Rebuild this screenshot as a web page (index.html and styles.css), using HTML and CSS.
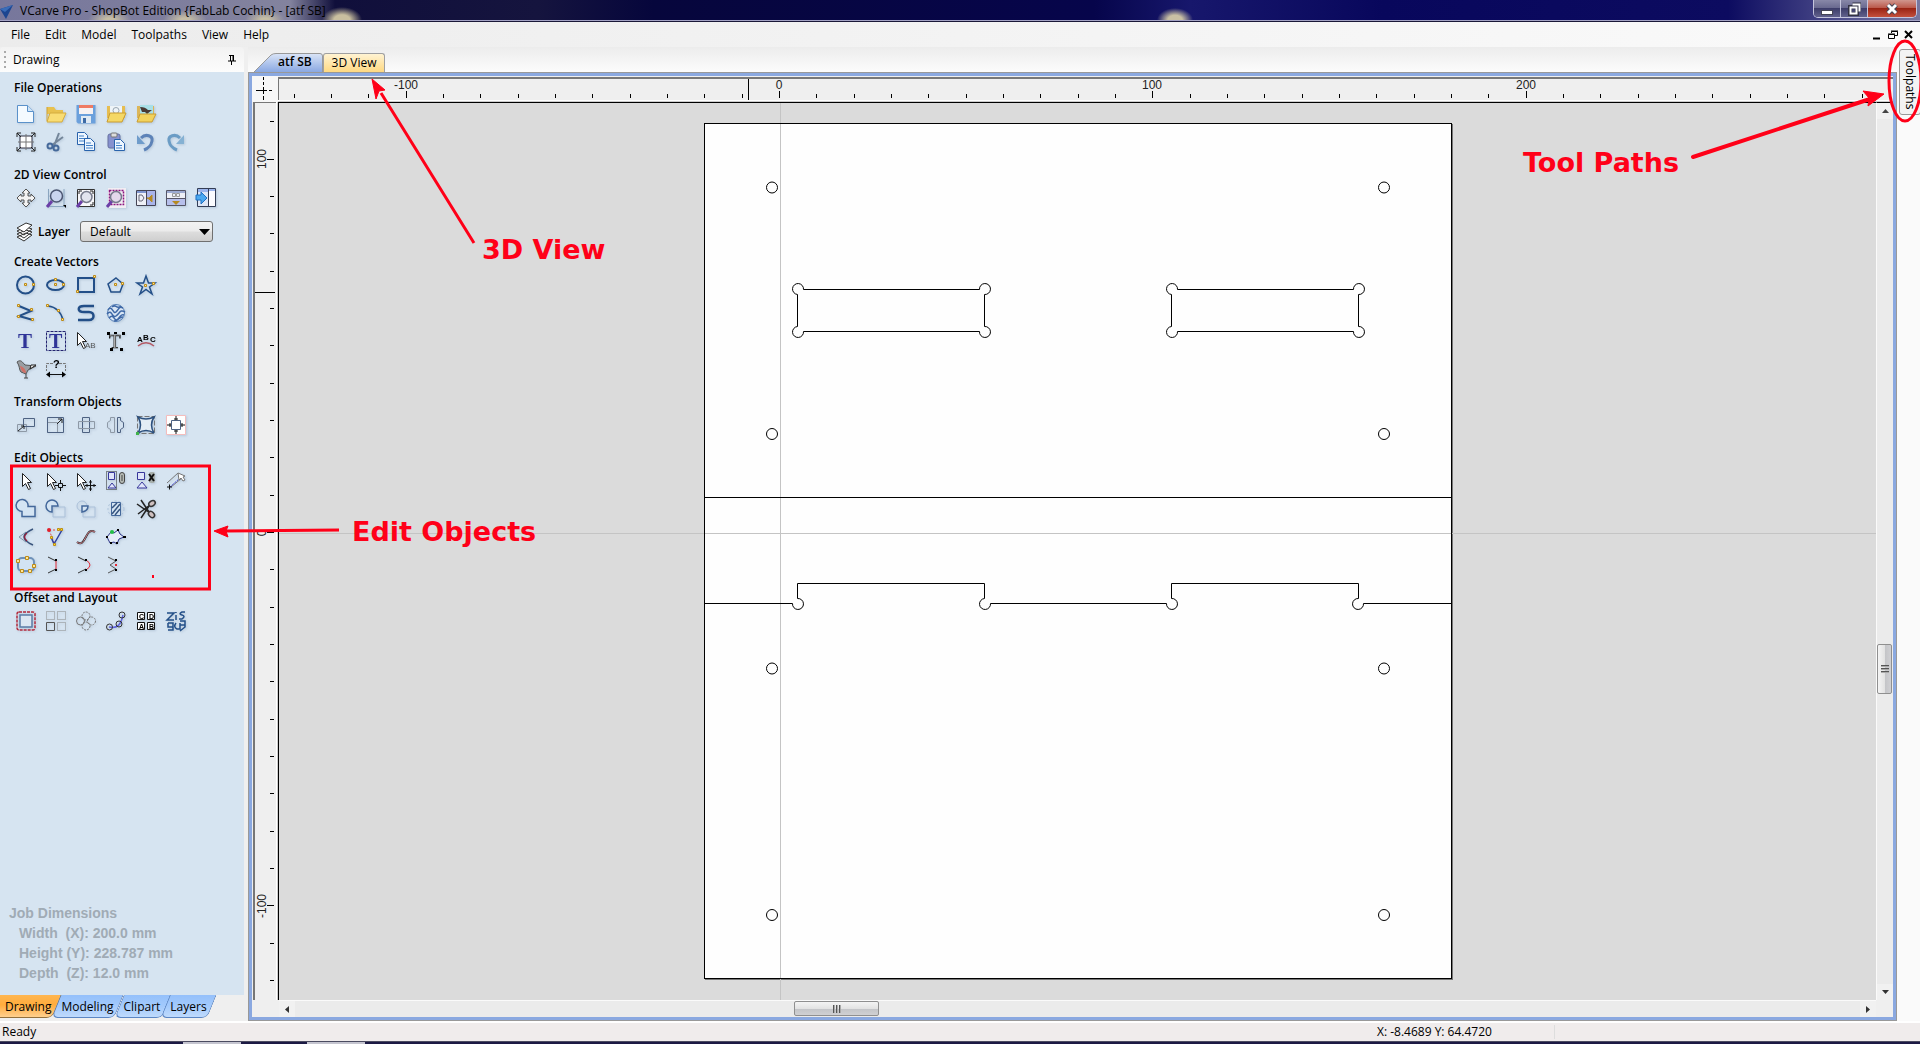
FILE: index.html
```html
<!DOCTYPE html>
<html lang="en">
<head>
<meta charset="utf-8">
<title>VCarve Pro - ShopBot Edition</title>
<link rel="stylesheet" href="styles.css">
</head>
<body>
<div class="app">
  <header class="titlebar">
    <svg class="title-logo" width="13" height="18" viewBox="0 0 13 18"><path d="M0 7 13 3 6 17Z" fill="#1d4590"/><path d="M0 7 13 3 5 10Z" fill="#3a6cb8"/></svg>
    <span class="title-text">VCarve Pro - ShopBot Edition {FabLab Cochin} - [atf SB]</span>
    <div class="window-buttons">
      <button class="win-btn" aria-label="Minimize"><svg width="12" height="14"><rect x=".5" y="8.500" width="11" height="4" fill="#fff" stroke="#445"/></svg></button>
      <button class="win-btn" aria-label="Restore"><svg width="13" height="14"><path d="M4.500 2.500h7v7M2 5h7v7H2Z" fill="none" stroke="#334" stroke-width="4"/><path d="M4.500 2.500h7v7M2.500 5.500h6v6h-6Z" fill="none" stroke="#fff" stroke-width="2"/></svg></button>
      <button class="win-btn win-close" aria-label="Close"><svg width="14" height="14"><path d="m3 3 8 8m0-8-8 8" stroke="#445" stroke-width="5"/><path d="m3 3 8 8m0-8-8 8" stroke="#fff" stroke-width="3"/></svg></button>
    </div>
  </header>

  <nav class="menubar">
    <button class="menu">File</button><button class="menu">Edit</button><button class="menu">Model</button><button class="menu">Toolpaths</button><button class="menu">View</button><button class="menu">Help</button>
    <div class="child-buttons">
      <button aria-label="Minimize drawing"><svg width="10" height="10"><path d="M1 8.500h7" stroke="#000" stroke-width="2"/></svg></button>
      <button aria-label="Restore drawing"><svg width="10" height="10"><path d="M3.500 3V1.500h6v4H7M3 1h7M.5 4.500h6v4h-6Z M0 4h7" fill="none" stroke="#000"/></svg></button>
      <button aria-label="Close drawing"><svg width="10" height="10"><path d="m1 1 7 7m0-7-7 7" stroke="#000" stroke-width="2"/></svg></button>
    </div>
  </nav>

  <main class="workspace">
    <aside class="dock">
      <div class="dock-header"><span class="grip"></span><span>Drawing</span>
        <button class="pin" aria-label="Auto hide"><svg width="8" height="10"><path d="M2.500 0v6M1 .5h5M5 0v6M0 6h8M3.500 6v4" fill="none" stroke="#000"/><path d="M5.500 0v6" stroke="#000"/></svg></button>
      </div>
      <div class="panel">
        <section class="group group-file">
          <h2>File Operations</h2>
          <div class="tools">
            <button aria-label="New"><svg viewBox="0 0 20 20"><path d="M1.500 1.500h10l6 6v11h-16Z" fill="#f4faff" stroke="#5a91ca"/><path d="M11.500 1.500v6h6" fill="#cfe4f7" stroke="#5a91ca"/></svg></button>
            <button aria-label="Open"><svg viewBox="0 0 20 20"><path d="M1 3h7l2 3h7v4H1Z" fill="#e8c14e"/><path d="M1 3v14" stroke="#cfa336"/><path d="M4 9h16l-4 9H1Z" fill="#f9dd74" stroke="#d5ac3e"/></svg></button>
            <button aria-label="Save"><svg viewBox="0 0 20 20"><path d="M.5 1h19v18.500H2L.5 18Z" fill="#6ba0dc"/><path d="M3 1h14v9H3Z" fill="#f6f1f2"/><path d="M3 1h14v3H3Z" fill="#ef7b63"/><path d="M5 12h10v7H5Z" fill="#dfe9f3"/><path d="M7 14h3v5H7Z" fill="#3e6ba6"/></svg></button>
            <button aria-label="Import vectors"><svg viewBox="0 0 20 20"><path d="M1 2h18v12H1Z" fill="#e6bd51"/><path d="M4 2h12v9H4Z" fill="#eef4f8"/><circle cx="10" cy="6.500" r="3" fill="none" stroke="#9aa7b3"/><path d="M4 9h16l-4 9H1Z" fill="#f5d865" stroke="#c99c31"/></svg></button>
            <button aria-label="Import bitmap"><svg viewBox="0 0 20 20"><path d="M1 2h17v12H1Z" fill="#dbb65a"/><path d="M4 1h13v10H4Z" fill="#a9e0e8"/><path d="M4 3c4 0 6 1 8 3h4l-5 4-2-2-3 0Z" fill="#493a35"/><path d="M4 10h16l-4 8H1Z" fill="#f2d25c" stroke="#c99c31"/></svg></button>
          </div>
          <div class="tools">
            <button aria-label="Job setup"><svg viewBox="0 0 20 20"><path d="M4 4h12v12H4Z" fill="#fff" stroke="#334"/><path d="M10 2v16M2 10h16" stroke="#777"/><path d="m1 1 4 4M1 5V1h4M19 1l-4 4M15 1h4v4M1 19l4-4M1 15v4h4M19 19l-4-4M15 19h4v-4" fill="none" stroke="#222"/></svg></button>
            <button aria-label="Cut"><svg viewBox="0 0 20 20"><path d="m13 1-5 13M17 5 6 13" stroke="#74869a" stroke-width="2"/><circle cx="4" cy="14" r="2.500" fill="none" stroke="#45699a" stroke-width="2"/><circle cx="10" cy="16" r="2.500" fill="none" stroke="#45699a" stroke-width="2"/></svg></button>
            <button aria-label="Copy"><svg viewBox="0 0 20 20"><path d="M1.500.5h7l3 3v9h-10Z" fill="#eef6ff" stroke="#2963ac"/><path d="M3 4h5M3 6.500h6M3 9h6" stroke="#4381c7"/><path d="M8.500 6.500h6l4 4v8h-10Z" fill="#eef6ff" stroke="#2963ac"/><path d="M10 11h5M10 13.500h7M10 16h7" stroke="#4381c7"/></svg></button>
            <button aria-label="Paste"><svg viewBox="0 0 20 20"><rect x="2" y="2" width="12" height="14" rx="2" fill="#8691cf" stroke="#66709f"/><rect x="5" y="1" width="6" height="4" rx="1" fill="#ddd" stroke="#777"/><path d="M8.500 7.500h6l4 4v7h-10Z" fill="#eef6ff" stroke="#2963ac"/><path d="M10 11h4M10 13.500h6M10 16h6" stroke="#4381c7"/></svg></button>
            <button aria-label="Undo"><svg viewBox="0 0 20 20"><path d="M5 6c5-5 12-2 11 3-1 5-3 7-8 9" fill="none" stroke="#5d83b8" stroke-width="3"/><path d="M1 3v9h8Z" fill="#6f9ccb"/></svg></button>
            <button aria-label="Redo"><svg viewBox="0 0 20 20"><path d="M14 6C9 1 2 4 3 9c1 5 3 7 8 9" fill="none" stroke="#6b9cc5" stroke-width="3"/><path d="M18 3v9h-8Z" fill="#85b1d3"/></svg></button>
          </div>
        </section>

        <section class="group">
          <h2>2D View Control</h2>
          <div class="tools">
            <button aria-label="Pan"><svg viewBox="0 0 20 20"><path d="m10 1 4 4h-2v3h3V6l4 4-4 4v-2h-3v3h2l-4 4-4-4h2v-3H5v2l-4-4 4-4v2h3V5H6Z" fill="#f3f3f3" stroke="#555"/></svg></button>
            <button aria-label="Zoom"><svg viewBox="0 0 20 20"><path d="M2.500 1v17.500H18V1" fill="none" stroke="#8ba6c0"/><path d="m6 13-5 6" stroke="#6b3fa8" stroke-width="3"/><circle cx="10.500" cy="8" r="6" fill="#c9d4ee" stroke="#4c5672" stroke-width="1.500"/><path d="M17 17h3v3" fill="#000"/></svg></button>
            <button aria-label="Zoom to drawing"><svg viewBox="0 0 20 20"><path d="M1.500 1.500h17v17h-17Z" fill="#f8f8fb" stroke="#333"/><path d="M3 6V3h3M14 3h3v3M17 14v3h-3" fill="none" stroke="#222"/><path d="m6 13-5 6" stroke="#6b3fa8" stroke-width="3"/><circle cx="10.500" cy="9" r="5.500" fill="#e2e4ee" stroke="#777b8c" stroke-width="1.500"/></svg></button>
            <button aria-label="Zoom to selected"><svg viewBox="0 0 20 20"><path d="M2 0h18v20H2Z" fill="#f1eef3"/><path d="M3.500 2.500h14v14h-14Z" fill="none" stroke="#8c1480" stroke-width="1.500" stroke-dasharray="2 1"/><path d="m6 13-5 6" stroke="#6b3fa8" stroke-width="3"/><circle cx="10" cy="9" r="5.500" fill="#e4d9ec" stroke="#777b8c" stroke-width="1.500"/></svg></button>
            <button aria-label="Tile vertically"><svg viewBox="0 0 20 20"><path d="M.5 2.500h19v15H.5Z" fill="#eef0f7" stroke="#445"/><path d="M1 3h18v2H1Z" fill="#7f96cf"/><path d="M10 3h9v14h-9Z" fill="#a9b4ea"/><path d="M10.500 3v14" stroke="#445"/><path d="M3 7h3l2 3-2 3H3Z" fill="none" stroke="#667"/><path d="M11 10h2l3-3v7l-3-3Z" fill="#b58a22" stroke="#b58a22"/></svg></button>
            <button aria-label="Tile horizontally"><svg viewBox="0 0 20 20"><path d="M.5 2.500h19v15H.5Z" fill="#eef0f7" stroke="#556"/><path d="M1 3h18v2H1Z" fill="#9dabd2"/><path d="M1 11h18v6H1Z" fill="#b7bfeb"/><path d="M0 10.500h20" stroke="#556"/><path d="M6.500 5.500h3v3h-3ZM10.500 5.500h3v3h-3Z" fill="none" stroke="#999"/><path d="m10 17-4-4h8Z" fill="#b58a22"/></svg></button>
            <button aria-label="Toggle panels"><svg viewBox="0 0 20 20"><path d="M1.500.5h18v18h-18Z" fill="#dde6f6" stroke="#333d55"/><path d="M2 1h17v3H2Z" fill="#9bb4ec"/><path d="M12.500 1v17" stroke="#333d55"/><path d="M13 3h6v15h-6Z" fill="#fbfbff"/><path d="M0 7h5V4l6 6-6 6v-4H0Z" fill="#4aa8f0" stroke="#1f70c4"/></svg></button>
          </div>
          <div class="layer-row">
            <svg width="18" height="20" viewBox="0 0 18 20"><path d="m1 15 9-4 6 2-8 6ZM1 12l9-4 6 2-8 6ZM1 9l9-4 6 2-8 6Z" fill="#fff" stroke="#333"/><path d="m1 6 9-5 6 2-8 7Z" fill="#fff" stroke="#333"/></svg>
            <label for="layer">Layer</label>
            <span class="select-wrap"><select id="layer"><option>Default</option></select><svg width="11" height="6"><path d="M0 0h11L5.500 6Z"/></svg></span>
          </div>
        </section>

        <section class="group">
          <h2>Create Vectors</h2>
          <div class="tools">
            <button aria-label="Circle"><svg viewBox="0 0 20 20"><circle class="ink" cx="9.500" cy="10" r="8.500"/><path class="node" d="M8.500 8.500h2v2h-2ZM16.500 8.500h2v2h-2Z"/></svg></button>
            <button aria-label="Ellipse"><svg viewBox="0 0 20 20"><ellipse class="ink" cx="9.500" cy="10" rx="8.500" ry="5"/><path class="node" d="M8.500 8.500h2v2h-2ZM16.500 8.500h2v2h-2ZM8.500 3.500h2v2h-2Z"/></svg></button>
            <button aria-label="Rectangle"><svg viewBox="0 0 20 20"><path class="ink" d="M2 3h16v14H2Z"/><path class="node" d="M17.500.5h2v2h-2ZM.5 15.500h2v2h-2Z"/></svg></button>
            <button aria-label="Polygon"><svg viewBox="0 0 20 20"><path class="ink thin" d="m10 3 7 6-3 8H5L2 9Z"/><path class="node" d="M8.500 8.500h2v2h-2ZM15.500 7.500h2v2h-2Z"/></svg></button>
            <button aria-label="Star"><svg viewBox="0 0 20 20"><path class="ink thin" d="m10 1 2.500 7H19l-5.500 4 2.500 7-6-4.500L4 19l2.500-7L1 8h6.500Z"/><path class="node" d="M8.500 9.500h2v2h-2ZM16.500 7.500h2v2h-2Z"/></svg></button>
          </div>
          <div class="tools">
            <button aria-label="Polyline"><svg viewBox="0 0 20 20"><path class="ink" d="m3 3 12 5L3 13l14 4"/><path class="node" d="M1.500 1.500h2v2h-2ZM14.500 5.500h2v2h-2ZM1.500 12.500h2v2h-2ZM15.500 15.500h2v2h-2Z"/></svg></button>
            <button aria-label="Arc"><svg viewBox="0 0 20 20"><path class="ink thin" d="M2 3c8 1 13 6 15 14"/><path class="node" d="M.5 1.500h2v2h-2ZM11.500 6.500h2v2h-2ZM15.500 15.500h2v2h-2Z"/></svg></button>
            <button aria-label="Curve"><svg viewBox="0 0 20 20"><path class="ink thick" d="M18 3H8C1 3 1 9 8 9h5c6 0 6 8 0 8H2"/></svg></button>
            <button aria-label="Texture"><svg viewBox="0 0 20 20"><circle cx="10" cy="10" r="8.500" fill="#d9e6f5" stroke="#527cb4"/><path d="M2 7c4-6 5 5 8 2s3-6 7-4M1 11c5-6 5 5 9 2s4-7 9-4M3 15c5-6 5 5 9 1s3-5 6-4M6 4c4-4 4 3 9-1M8 18c5 0 4-4 9-4" fill="none" stroke="#3f69a7" stroke-width="1.500"/></svg></button>
          </div>
          <div class="tools">
            <button aria-label="Text"><svg viewBox="0 0 20 20"><text class="glyph" x="2" y="17" font-size="21">T</text></svg></button>
            <button aria-label="Text in box"><svg viewBox="0 0 20 20"><path d="M.5.500h19v19H.5Z" fill="none" stroke="#23236f" stroke-dasharray="3 1"/><text class="glyph" x="3" y="17" font-size="20">T</text></svg></button>
            <button aria-label="Edit text"><svg viewBox="0 0 20 20"><path class="cursor" d="M1.500 1.500v13l3-3 3 6 2-1-3-6h4Z"/><text x="9" y="17" font-size="8" font-family="Liberation Sans" fill="#555">AB</text></svg></button>
            <button aria-label="Convert text"><svg viewBox="0 0 20 20"><text x="3" y="17" font-size="19" font-family="Liberation Serif" fill="#ddd" stroke="#222" stroke-width=".7">T</text><path d="M1 1h3v3H1ZM16 1h3v3h-3ZM4 17h3v3H4ZM14 17h3v3h-3ZM8 1h3v2H8Z"/></svg></button>
            <button aria-label="Text on curve"><svg viewBox="0 0 20 20"><text x="1" y="11" font-size="8" font-weight="bold" font-family="Liberation Sans">A</text><text x="7" y="9" font-size="8" font-weight="bold" font-family="Liberation Sans">B</text><text x="14" y="11" font-size="8" font-weight="bold" font-family="Liberation Sans">C</text><path d="M2 15c5-4 11-4 16 0" fill="none" stroke="#b45a66" stroke-width="1.500"/></svg></button>
          </div>
          <div class="tools">
            <button aria-label="Trace bitmap"><svg viewBox="0 0 20 20"><path d="M1 3c4-3 5 0 8 3l11 1-8 4-2 4-5-2C3 11 4 7 1 3Z" fill="#9a9ea2" stroke="#555"/><path d="M15 6h5l-6 4Z" fill="#fff" stroke="#222"/><path d="M4 7c2 0 6 3 6 7-4 0-5-3-6-7Z" fill="#cf7066"/><path d="M10 15v4M8 19h4" stroke="#444"/></svg></button>
            <button aria-label="Dimension"><svg viewBox="0 0 20 20"><path d="M7 4.500H.5V12M13 4.500h6.500V12" fill="none" stroke="#777" stroke-dasharray="3 1"/><path d="M2 15.500h16" stroke="#111" stroke-width="1"/><path d="m0 15.500 4-3v6ZM20 15.500l-4-3v6Z"/><text x="7" y="9" font-size="11" font-weight="bold" font-family="Liberation Sans">?</text></svg></button>
          </div>
        </section>

        <section class="group">
          <h2>Transform Objects</h2>
          <div class="tools">
            <button aria-label="Move"><svg viewBox="0 0 20 20"><path class="dim" d="M1.500 9.500h9v7h-9Z"/><path class="slate" d="M7.500 3.500h11v8h-11Z"/><path d="m2 16 6-5M5 11h3v3" fill="none" stroke="#222"/></svg></button>
            <button aria-label="Scale"><svg viewBox="0 0 20 20"><path class="dim" d="M1.500 7.500h10v10h-10Z"/><path class="slate" d="M1.500 2.500h16v15h-16Z"/><path d="m11 9 5-5M12 4h4v4" fill="none" stroke="#222"/></svg></button>
            <button aria-label="Rotate"><svg viewBox="0 0 20 20"><path class="slate" d="M6.500 2.500h7v15h-7Z"/><path class="dim" d="M2.500 6.500h16v7h-16Z"/></svg></button>
            <button aria-label="Mirror"><svg viewBox="0 0 20 20"><path class="dim" d="M8.500 2.500v15h-4v-3l-3-2v-5l3-2v-3Z"/><path class="slate" d="M11.500 2.500v15h3v-3l3-2v-5l-3-2v-3Z"/></svg></button>
            <button aria-label="Distort"><svg viewBox="0 0 20 20"><path d="M1.500 1.500h17v17h-17Z" fill="none" stroke="#777" stroke-dasharray="5 2"/><path d="M2 2q8 4 16 0-5 8 0 16-8-5-16 0 5-8 0-16Z" fill="#e4edf5" stroke="#2c507e" stroke-width="1.500"/><path d="M0 17h3v3H0Z" fill="#3eb24a"/></svg></button>
            <button aria-label="Center"><svg viewBox="0 0 20 20"><path d="M.5.500h19v19H.5Z" fill="#fff" stroke="#f4bdbd"/><path class="slate" d="M5.500 5.500h9v9h-9Z"/><path d="M10 1v4M8 4h4M10 19v-4M8 16h4M1 10h4M4 8v4M19 10h-4M16 8v4" stroke="#111"/></svg></button>
          </div>
        </section>

        <section class="group">
          <h2>Edit Objects</h2>
          <div class="tools">
            <button aria-label="Select"><svg viewBox="0 0 20 20"><path class="cursor" d="M6.500 2.500v13l3-3 3 6 2-1-3-6h4Z"/></svg></button>
            <button aria-label="Node edit"><svg viewBox="0 0 20 20"><path class="cursor" d="M1.500 2.500v13l3-3 3 6 2-1-3-6h4Z"/><path d="M12.500 12.500h4v4h-4ZM14.500 9v3M14.500 17v3M9 14.500h3M17 14.500h3" fill="none" stroke="#111"/></svg></button>
            <button aria-label="Transform mode"><svg viewBox="0 0 20 20"><path class="cursor" d="M1.500 2.500v13l3-3 3 6 2-1-3-6h4Z"/><path d="M14.500 9v11M9 14.500h11M13 11h3M13 18h3M11 13v3M18 13v3" fill="none" stroke="#111"/></svg></button>
            <button aria-label="Group"><svg viewBox="0 0 20 20"><path d="M.5.500h10v18H.5Z" fill="none" stroke="#222" stroke-dasharray="1 1"/><path class="violet" d="M2.500 1.500h6v7h-6ZM6 12l4 5H2Z"/><rect x="13.500" y="1.500" width="5" height="11" rx="2.500" fill="#b5bab5" stroke="#444"/><path d="M16 4v6" fill="none" stroke="#444"/></svg></button>
            <button aria-label="Ungroup"><svg viewBox="0 0 20 20"><path class="violet" d="M1.500 1.500h7v7h-7ZM6 11l5 6H1Z"/><rect x="13" y="1" width="6" height="11" rx="2" fill="#a8b0ad"/><path d="m13 3 5 7m0-7-5 7" stroke="#111" stroke-width="2"/></svg></button>
            <button aria-label="Measure"><svg viewBox="0 0 20 20"><path d="M1 12 12 2M5 16l11-9" stroke="#777"/><path d="m4 16 10-9" stroke="#3639ce" stroke-dasharray="2 1"/><path d="M1 16h5M3.500 13.500v5" stroke="#111"/><path d="m12 2 1 7 2-2 2 3 2-1-2-3 2-1Z" fill="#fff" stroke="#777"/></svg></button>
          </div>
          <div class="tools">
            <button aria-label="Weld"><svg viewBox="0 0 20 20"><path class="blue" d="M12 7.500h7v10H6v-5a6 6 0 1 1 6-5Z" stroke-width="1.500"/></svg></button>
            <button aria-label="Subtract"><svg viewBox="0 0 20 20"><path class="faint" d="M7 8h12v10H7Z"/><path class="blue" d="M12 7H6v6a6 6 0 1 1 6-6Z" stroke-width="1.500"/></svg></button>
            <button aria-label="Intersect"><svg viewBox="0 0 20 20"><circle class="faint" cx="6" cy="7" r="5"/><path class="faint" d="M7 8h12v10H7Z"/><path class="blue" d="M6 7h6q0 5-6 6Z" stroke-width="1.500"/></svg></button>
            <button aria-label="Overlap"><svg viewBox="0 0 20 20"><circle class="faint" cx="10" cy="10" r="8" stroke-dasharray="2 2"/><path class="blue" d="M5.500 3.500h9v13h-9Z"/><path d="m6 9 5-5M6 15 14 5M9 16l5-6" stroke="#35547f" stroke-width="1.500"/></svg></button>
            <button aria-label="Trim"><svg viewBox="0 0 20 20"><path d="m1 5 13 9M5 1l8 12M2 15 14 6M5 19l8-12" stroke="#222" stroke-width="1.500"/><ellipse cx="16" cy="4.500" rx="3.500" ry="2.500" transform="rotate(-35 16 4.500)" fill="#cfc0c0" stroke="#333" stroke-width="1.500"/><ellipse cx="15.500" cy="15.500" rx="3.500" ry="2.500" transform="rotate(45 15.500 15.500)" fill="#cfc0c0" stroke="#333" stroke-width="1.500"/></svg></button>
          </div>
          <div class="tools">
            <button aria-label="Fillet"><svg viewBox="0 0 20 20"><path d="M10 5 3 10l7 5" fill="none" stroke="#8296aa"/><path d="M17 2Q-1 10 17 18" fill="none" stroke="#39547d" stroke-width="1.500"/><path d="M11 6q-5 4 0 8" fill="none" stroke="#8e1f3c" stroke-width="1.500"/></svg></button>
            <button aria-label="Extend"><svg viewBox="0 0 20 20"><path d="M3 3h12M3 3l5 12" stroke="#e14a4a" stroke-dasharray="2 2"/><path d="M8 17 16 3M8 17 5 10" stroke="#2d3f9d" stroke-width="1.500"/><path class="node yellow" d="M11.500 1.500h2v2h-2ZM14.500 1.500h2v2h-2ZM4.500 9.500h2v2h-2ZM7.500 16.500h2v2h-2Z"/><circle cx="3" cy="3" r="2" fill="#e3202b"/></svg></button>
            <button aria-label="Join"><svg viewBox="0 0 20 20"><path d="M1 15c9 7 8-16 18-10" fill="none" stroke="#222" stroke-width="2"/><path d="M1 15c9 7 8-16 18-10" fill="none" stroke="#e08a94"/></svg></button>
            <button aria-label="Close vector"><svg viewBox="0 0 20 20"><path d="m5 5 3 1 4-3 2 4 4 3-5 2-2 5-3-2-4 1-3-6Z" fill="#e5edf8" stroke="#2b3287"/><circle cx="6" cy="5" r="2" fill="#24c045"/><path d="M11 2h2v2h-2ZM17 9h3v2h-3ZM10 15h2v2h-2ZM0 9h2v2H0ZM4 15h2v2H4Z"/></svg></button>
          </div>
          <div class="tools">
            <button aria-label="Fit curves"><svg viewBox="0 0 20 20"><rect x="2" y="3" width="16" height="13" rx="4" fill="#d2e3f3" stroke="#6d90b8" stroke-width="2"/><path class="node" d="M.5 4.500h3v3h-3ZM9.500 1.500h3v3h-3ZM16.500 9.500h3v3h-3ZM4.500 14.500h3v3h-3ZM12.500 14.500h3v3h-3Z"/></svg></button>
            <button aria-label="Join with line"><svg viewBox="0 0 20 20"><path d="m2 2 8 4M2 18l8-4" stroke="#333"/><path d="M10 6v8" stroke="#e32632"/><path d="M9 4h2v2H9ZM9 14h2v2H9Z"/></svg></button>
            <button aria-label="Join with curve"><svg viewBox="0 0 20 20"><path d="m2 2 8 4M2 18l8-4" stroke="#333"/><path d="M10 5q8 5 0 10" fill="none" stroke="#e32632"/><path d="M9 4h2v2H9ZM9 14h2v2H9Z"/></svg></button>
            <button aria-label="Join moving ends"><svg viewBox="0 0 20 20"><path d="m2 2 8 4M2 18l8-4M10 6l-6 4 6 4" fill="none" stroke="#555"/><path d="M9 4h2v2H9ZM9 14h2v2H9Z"/><path d="M9 9h2v2H9Z" fill="#e32632"/></svg></button>
          </div>
        </section>

        <section class="group">
          <h2>Offset and Layout</h2>
          <div class="tools">
            <button aria-label="Offset"><svg viewBox="0 0 20 20"><rect x="1" y="1" width="18" height="18" rx="2" fill="none" stroke="#b3283b" stroke-width="1.500" stroke-dasharray="3 1"/><path d="M4 4h12v12H4Z" fill="#dce7f2" stroke="#5b7ca5" stroke-width="1.500"/></svg></button>
            <button aria-label="Array copy"><svg viewBox="0 0 20 20"><path d="M.5.500h8v8h-8ZM11.500.500h8v8h-8ZM11.500 11.500h8v8h-8Z" fill="none" stroke="#888" stroke-dasharray="1 1"/><path d="M.5 11.500h8v8h-8Z" fill="none" stroke="#555"/></svg></button>
            <button aria-label="Circular array"><svg viewBox="0 0 20 20" fill="none" stroke="#777" stroke-dasharray="2 1"><circle cx="10" cy="5" r="4"/><circle cx="10" cy="15" r="4"/><circle cx="15.500" cy="10" r="4"/><circle cx="4.500" cy="10" r="4" stroke-dasharray="none"/></svg></button>
            <button aria-label="Copy along vectors"><svg viewBox="0 0 20 20"><path d="M3 16c9 2 12-3 14-12" fill="none" stroke="#6065df" stroke-width="1.500"/><g fill="none" stroke="#333"><circle cx="3.500" cy="16" r="3"/><circle cx="13" cy="13" r="3"/><circle cx="16" cy="4" r="3"/></g></svg></button>
            <button aria-label="Block layout"><svg viewBox="0 0 20 20"><path d="M1.500 1.500h7v7h-7ZM11.500 1.500h7v7h-7ZM1.500 11.500h7v7h-7ZM11.500 11.500h7v7h-7Z" fill="#fff" stroke="#111"/><g font-size="7" font-weight="bold" font-family="Liberation Sans"><text x="3" y="8">C</text><text x="13" y="8">D</text><text x="3" y="18">A</text><text x="13" y="18">B</text></g></svg></button>
            <button aria-label="Nest parts"><svg viewBox="0 0 20 20"><path d="M1 2h7L1 9h7M10 4v5M10 1v1M13 8h3q4-3 0-4t0-3h3M2 12h5v7H2M2 12v4h5M10 12q-3 4 1 6h3v-6M14 10h5v4h-5M19 10v6l-5 4" fill="none" stroke="#234f88" stroke-width="1.500"/></svg></button>
          </div>
        </section>

        <div class="job">
          <p>Job Dimensions</p>
          <p class="job-line">Width  (X): 200.0 mm</p>
          <p class="job-line">Height (Y): 228.787 mm</p>
          <p class="job-line">Depth  (Z): 12.0 mm</p>
        </div>
      </div>
      <div class="dock-tabs">
        <button class="dock-tab active">Drawing</button><button class="dock-tab">Modeling</button><button class="dock-tab">Clipart</button><button class="dock-tab">Layers</button>
      </div>
    </aside>

    <section class="document">
      <div class="doc-tabs">
        <button class="doc-tab doc-tab-active"><svg width="70" height="19" viewBox="0 0 70 19"><defs><linearGradient id="tabBlue" x1="0" y1="0" x2="0" y2="1"><stop offset="0" stop-color="#dbe5f7"/><stop offset="1" stop-color="#8aa8e2"/></linearGradient></defs><path d="M1 19 18 2Q20 .5 23 .5H67Q69.500.5 69.500 3V19" fill="url(#tabBlue)" stroke="#999"/></svg><span>atf SB</span></button><button class="doc-tab">3D View</button>
      </div>
      <div class="frame">
        <div class="corner"><svg width="24" height="24"><path d="M10.500 0v3M10.500 5v3M10.500 10v7M10.500 19v4M3 13.500h4M7 13.500h7M16 13.500h3" fill="none" stroke="#000"/></svg></div>
        <div class="ruler ruler-h">
          <svg width="100%" height="21"><g transform="translate(500 0)">
            <path class="tick" d="M-484.500 15v4M-447.500 15v4M-410.500 15v4M-372.500 12v7M-335.500 15v4M-298.500 15v4M-260.500 15v4M-223.500 15v4M-186.500 15v4M-148.500 15v4M-111.500 15v4M-74.500 15v4M-36.500 15v4M.5 12v7M37.500 15v4M75.500 15v4M112.500 15v4M149.500 15v4M187.500 15v4M224.500 15v4M261.500 15v4M299.500 15v4M336.500 15v4M373.500 12v7M411.500 15v4M448.500 15v4M485.500 15v4M523.500 15v4M560.500 15v4M597.500 15v4M635.500 15v4M672.500 15v4M709.500 15v4M747.500 12v7M784.500 15v4M821.500 15v4M859.500 15v4M896.500 15v4M933.500 15v4M971.500 15v4M1008.500 15v4M1045.500 15v4M1083.500 15v4M-30.500 0v21"/>
            <text x="-373" y="10">-100</text><text x="0" y="10">0</text><text x="373" y="10">100</text><text x="747" y="10">200</text>
          </g></svg>
        </div>
        <div class="ruler ruler-v">
          <svg width="20" height="100%"><g transform="translate(0 430)">
            <path class="tick" d="M15 -411.500h4M12 -373.500h7M15 -336.500h4M15 -299.500h4M15 -261.500h4M15 -224.500h4M15 -187.500h4M15 -149.500h4M15 -112.500h4M15 -75.500h4M15 -37.500h4M12 -.5h7M15 36.500h4M15 74.500h4M15 111.500h4M15 148.500h4M15 186.500h4M15 223.500h4M15 260.500h4M15 298.500h4M15 335.500h4M12 372.500h7M15 410.500h4M15 447.500h4M0 -240.500h20"/>
            <text transform="translate(11 -374) rotate(-90)">100</text><text transform="translate(11 0) rotate(-90)">0</text><text transform="translate(11 373) rotate(-90)">-100</text>
          </g></svg>
        </div>
        <div class="canvas">
          <svg width="100%" height="100%">
            <rect x="426" y="21" width="748" height="856" fill="#777"/>
            <rect x="425.500" y="20.500" width="747" height="855" fill="#fefefe"/>
            <rect x="501" y="0" width="1" height="100%" fill="#c4c4c4"/>
            <rect x="0" y="430" width="100%" height="1" fill="#c4c4c4"/>
            <g class="vector">
              <rect x="425.500" y="20.500" width="747" height="855"/>
              <path d="M425.500 394.500h747"/>
              <circle cx="493" cy="84.500" r="5.500"/><circle cx="1105" cy="84.500" r="5.500"/>
              <circle cx="493" cy="331" r="5.500"/><circle cx="1105" cy="331" r="5.500"/>
              <circle cx="493" cy="565.500" r="5.500"/><circle cx="1105" cy="565.500" r="5.500"/>
              <circle cx="493" cy="812" r="5.500"/><circle cx="1105" cy="812" r="5.500"/>
              <path id="slot" d="M524.500 186.500H700.500A5.500 5.500 0 1 1 705.500 191.500V223.500A5.500 5.500 0 1 1 700.500 228.500H524.500A5.500 5.500 0 1 1 518.500 223.500V191.500A5.500 5.500 0 1 1 524.500 186.500Z"/>
              <use href="#slot" x="374"/>
              <path d="M425.500 500.500H513.500A5.500 5.500 0 1 0 518.500 495.500V480.500H705.500V495.500A5.500 5.500 0 1 0 711.500 500.500H887.500A5.500 5.500 0 1 0 892.500 495.500V480.500H1079.500V495.500A5.500 5.500 0 1 0 1084.500 500.500H1172.500"/>
            </g>
          </svg>
        </div>
        <div class="scroll scroll-v">
          <button class="arrow" aria-label="Scroll up"><svg width="7" height="4"><path d="M0 4h7L3.500 0Z" fill="#444"/></svg></button><span class="before"></span><span class="thumb"></span><span class="after"></span><button class="arrow" aria-label="Scroll down"><svg width="7" height="4"><path d="M0 0h7L3.500 4Z" fill="#333"/></svg></button>
        </div>
        <div class="scroll scroll-h">
          <button class="arrow" aria-label="Scroll left"><svg width="4" height="7"><path d="M4 0v7L0 3.500Z" fill="#333"/></svg></button><span class="before"></span><span class="thumb"></span><span class="after"></span><button class="arrow" aria-label="Scroll right"><svg width="4" height="7"><path d="M0 0v7l4-3.500Z" fill="#333"/></svg></button>
        </div>
      </div>
    </section>

    <aside class="right-dock"><button class="side-tab">Toolpaths</button></aside>
  </main>

  <footer class="status"><span>Ready</span><span class="coords">X: -8.4689 Y: 64.4720</span><span class="cell"></span></footer>
  <div class="taskbar"><span></span><span></span></div>

  <svg class="notes" width="100%" height="100%">
    <g class="note-line">
      <rect x="11.500" y="466" width="198" height="123"/>
      <path d="M474 243 381 93M339 530 226 531" stroke-width="3"/>
    </g>
    <path class="note-fill" d="m372 79 13 11-6 1-3 8ZM214 531l14-5-2 5 2 6Z"/>
    <path d="M152 575h2v3h-2Z" fill="#ff0018"/>
    <text x="482" y="259">3D View</text>
    <text x="352" y="541">Edit Objects</text>
  </svg>
  <svg class="notes notes-right" width="420" height="190">
    <ellipse class="note-line" cx="405" cy="81" rx="16" ry="40"/>
    <path class="note-line round" d="M193 157 370 99"/>
    <path class="note-fill" d="m384 94-21-3 6 7-1 8Z"/>
    <text x="23" y="172">Tool Paths</text>
  </svg>
</div>
</body>
</html>
```
FILE: styles.css
```css
* { box-sizing: border-box; }
body { margin: 0; font-family: "Open Sans", "Noto Sans", sans-serif; font-size: 12px; line-height: 16px; color: #000; }
button { margin: 0; padding: 0; border: 0; background: none; font: inherit; color: inherit; }
svg { display: block; }
h2, p { margin: 0; }

.app { position: relative; height: 100vh; display: flex; flex-direction: column; background: #efefef; overflow: hidden; }

/* window title */
.titlebar {
  height: 22px; flex: none; display: flex; align-items: flex-start; overflow: hidden;
  border-bottom: 1px solid #1a1838; box-shadow: inset 0 -1px #a3a2c4;
  background:
    radial-gradient(ellipse 20px 13px at 342px 20px, #c9bf9f 40%, transparent),
    radial-gradient(ellipse 18px 12px at 1175px 20px, #c9c0a4 40%, transparent),
    radial-gradient(ellipse 22px 10px at 110px 20px, #c5bda4 20%, transparent),
    radial-gradient(ellipse 22px 10px at 185px 20px, #c5bda4 20%, transparent),
    radial-gradient(ellipse 20px 10px at 265px 20px, #c5bda4 20%, transparent),
    linear-gradient(90deg, #77779c 0, #83839e 290px, transparent 335px),
    linear-gradient(90deg, #080736 0, #15143e 28%, #06063c 34%, #06054b 57%, #17176c 62%, #08075c 72%, #0c0b60 90%, #5a5a94 97%, #77779f 100%);
}
.title-logo { margin-top: 2px; }
.title-text { margin-left: 7px; line-height: 22px; white-space: nowrap; }
.window-buttons { margin: 0 3px 0 auto; display: flex; height: 18px; border: 1px solid #c5c5dd; border-top: 0; border-radius: 0 0 5px 5px; overflow: hidden; }
.win-btn { width: 27px; display: flex; justify-content: center; align-items: center; border-right: 1px solid #c5c5dd; background: linear-gradient(#8888a8, #6a6a90 45%, #3d3d6a 50%, #61618c); }
.win-close { width: 48px; border-right: 0; background: linear-gradient(#d0968e, #bb5a4c 45%, #9a2414 50%, #c4503c); }

/* menu */
.menubar { height: 25px; flex: none; display: flex; align-items: center; gap: 15px; padding: 0 6px 0 11px; background: linear-gradient(90deg, #ececec, #fafafa); }
.child-buttons { margin-left: auto; display: flex; gap: 6px; }

.workspace { flex: 1; min-height: 0; display: flex; }

/* left dock */
.dock { width: 244px; flex: none; display: flex; flex-direction: column; }
.dock-header { height: 25px; flex: none; display: flex; align-items: center; gap: 7px; padding: 0 8px 0 4px; background: linear-gradient(#f2f2f2, #fcfcfc); border-radius: 4px 4px 0 0; }
.grip { width: 2px; height: 18px; background: repeating-linear-gradient(#aaa 0 2px, transparent 2px 5px); }
.pin { margin-left: auto; }
.panel { flex: 1; min-height: 0; display: flex; flex-direction: column; padding: 7px 14px 12px; background: #d6e4f1; }
.group { margin-bottom: 10px; }
.group h2 { font-size: 12px; line-height: 18px; font-weight: 600; }
.group-file h2 { margin-bottom: 3px; }
.tools { height: 28px; display: flex; align-items: center; gap: 10px; padding-left: 2px; }
.tools svg { width: 20px; height: 20px; overflow: visible; filter: drop-shadow(1px 1px 1px #7a93ad55); }
.layer-row { height: 31px; display: flex; align-items: center; gap: 4px; padding: 8px 0 0 2px; font-weight: 600; }
.layer-row label { width: 38px; }
.select-wrap { position: relative; }
.select-wrap svg { position: absolute; right: 3px; top: 8px; }
select { appearance: none; display: block; width: 133px; height: 21px; padding: 0 9px; border: 1px solid #707070; border-radius: 3px; background: linear-gradient(#f2f2f2, #ebebeb 48%, #dddddd 52%, #cfcfcf); font: 12px "Open Sans", sans-serif; color: #000; }
.ink { fill: none; stroke: #234f88; stroke-width: 2; }
.thin { stroke-width: 1.5; }
.thick { stroke-width: 2.5; }
.node { fill: #ffe79a; stroke: #bd8b17; }
.yellow { fill: #f5e925; }
.glyph { font-family: "Liberation Serif", serif; font-weight: bold; fill: #2f3498; }
.cursor { fill: #fff; stroke: #222; }
.slate { fill: none; stroke: #4e6282; }
.dim { fill: none; stroke: #8e99a6; }
.violet { fill: #dfe4fa; stroke: #37379b; }
.blue { fill: #d4e4f3; stroke: #44689b; }
.faint { fill: none; stroke: #abc0d9; }

.job { margin: auto 0 0 -5px; font: bold 14px/20px "Liberation Sans", sans-serif; color: #a0abb5; }
.job-line { padding-left: 10px; white-space: pre; }

.dock-tabs { height: 26px; flex: none; display: flex; }
.dock-tab { position: relative; z-index: 0; height: 23px; padding: 0 4px 0 6px; }
.dock-tab::before { content: ""; position: absolute; z-index: -1; inset: 0 -2px 0 1px; border: 1px solid #5b86c4; border-top: 0; border-radius: 0 0 6px 6px; background: linear-gradient(#94c0fb, #a3cafc 50%, #bfdafc); transform: skewX(-22deg); }
.dock-tab.active { padding-left: 5px; }
.dock-tab.active::before { border-color: #93703c; background: linear-gradient(#ffb650, #ffac3d 45%, #ffcf8e); inset: 0 -2px 0 -14px; }

/* document window */
.document { flex: 1; min-width: 0; margin-left: 4px; display: flex; flex-direction: column; }
.doc-tabs { height: 25px; flex: none; display: flex; align-items: flex-end; padding: 0 0 0 5px; background: linear-gradient(#ececec, #fcfcfc); }
.doc-tab { height: 19px; width: 62px; border: 1px solid #a0a0a0; border-bottom: 0; border-radius: 3px 3px 0 0; background: linear-gradient(#fff3d3, #ffd982); }
.doc-tab-active { width: 70px; display: grid; justify-items: start; border: 0; background: none; font-weight: 600; }
.doc-tab-active > * { grid-area: 1 / 1; }
.doc-tab-active span { padding: 1px 0 0 25px; }
.frame {
  flex: 1; min-height: 0; display: grid; grid-template: 26px 1fr 17px / 26px 1fr 17px;
  border: 3px solid #8aa8e0; outline: 1px solid #999; margin: 1px;
  background: #efefef;
}
.corner { padding: 1px; background: #f7f7f7; }
.ruler { background: #efefef; border: 0 solid #777; }
.ruler-h { grid-column: 2 / 4; height: 23px; margin-top: 1px; border-width: 2px 0 0 1px; box-shadow: 0 1px #fff, 0 2px #ccc; overflow: hidden; }
.ruler-v { width: 23px; margin-left: 1px; border-width: 1px 0 0 2px; box-shadow: 1px 0 #fff, 2px 0 #ccc; overflow: hidden; }
.ruler text { font: 12px "Liberation Sans", sans-serif; fill: #222; text-anchor: middle; }
.tick { stroke: #000; fill: none; shape-rendering: crispEdges; }
.canvas { min-width: 0; min-height: 0; background: #dbdbdb; border: solid #000; border-width: 1px 0 0 1px; overflow: hidden; }
.vector { fill: none; stroke: #000; }
.scroll { display: flex; background: #ebebeb; }
.scroll-v { flex-direction: column; border-left: 1px solid #fafafa; border-top: 1px solid #000; }
.scroll-h { grid-column: 1 / 3; margin-left: 27px; border-top: 1px solid #fafafa; }
.arrow { width: 16px; height: 16px; flex: none; display: grid; place-items: center; background: #f1f1f1; }
.thumb { border: 1px solid #8f8f8f; border-radius: 2px; display: grid; place-items: center; }
.thumb::after { content: ""; width: 8px; height: 8px; }
.scroll-h .before { flex: 499; }
.scroll-h .after { flex: 980; }
.scroll-h .thumb { width: 85px; height: 15px; background: linear-gradient(#f4f4f4, #e3e3e3 50%, #c3c4c7 52%, #d0d0d3); }
.scroll-h .thumb::after { background: repeating-linear-gradient(90deg, #555 0 1px, #aaa 1px 2px, transparent 2px 3px); }
.scroll-v .before { flex: 524; }
.scroll-v .after { flex: 289; }
.scroll-v .thumb { height: 50px; width: 15px; background: linear-gradient(90deg, #f4f4f4, #e3e3e3 50%, #c3c4c7 52%, #d0d0d3); }
.scroll-v .thumb::after { background: repeating-linear-gradient(#555 0 1px, #aaa 1px 2px, transparent 2px 3px); }

/* right dock */
.right-dock { width: 23px; flex: none; padding: 2px 0 0 2px; background: #fafafa; }
.side-tab { width: 22px; height: 66px; border: 1px solid #999; border-radius: 3px; background: #f3f3f3; writing-mode: vertical-rl; text-align: center; }

/* status */
.status { height: 20px; flex: none; display: flex; align-items: center; padding-left: 2px; border-top: 2px solid #fff; background: #f0ecec; }
.coords { margin-left: auto; width: 177px; white-space: nowrap; }
.cell { width: 366px; height: 14px; border-left: 1px solid #ddd; }
.taskbar { height: 3px; flex: none; display: flex; gap: 66px; padding-left: 183px; background: #1c1a44; border-top: 1px solid #4b4b60; }
.taskbar span { width: 58px; background: #c5c5d0; }

/* callouts drawn over the window */
.notes { position: absolute; left: 0; top: 0; pointer-events: none; }
.notes-right { left: auto; right: 0; }
.notes text { font: bold 27px "DejaVu Sans", sans-serif; fill: #ff0018; }
.note-line { fill: none; stroke: #ff0018; stroke-width: 3; }
.round { stroke-width: 4; stroke-linecap: round; }
.note-fill { fill: #ff0018; stroke: #ff0018; }
```
